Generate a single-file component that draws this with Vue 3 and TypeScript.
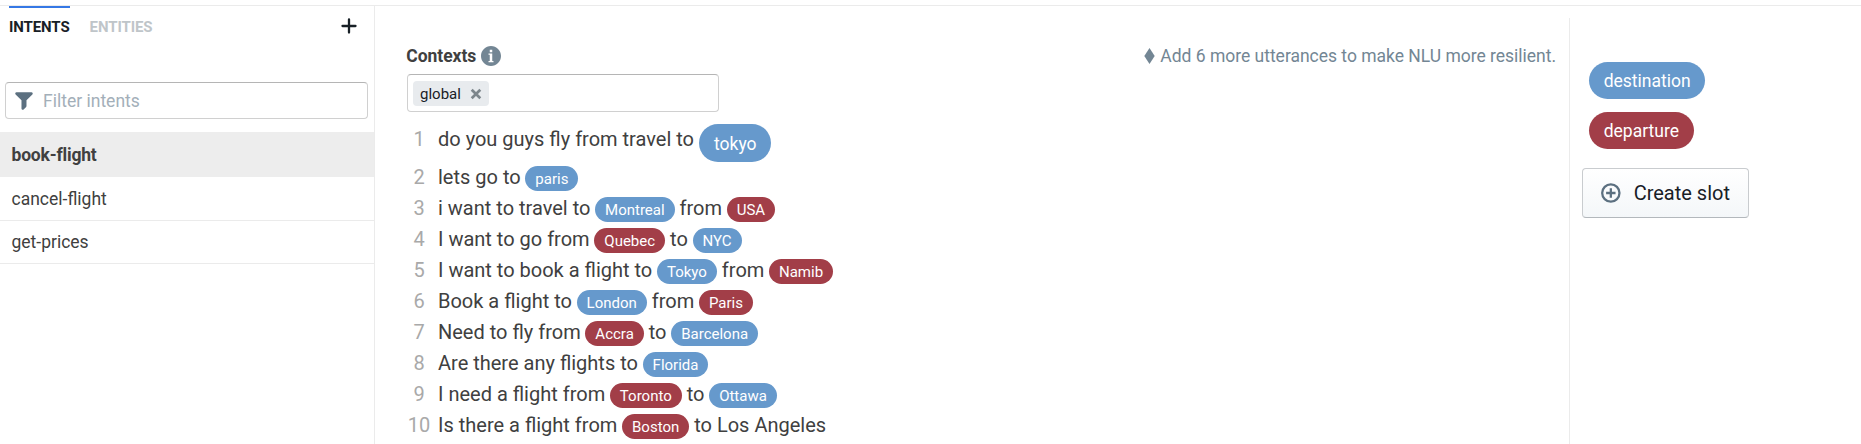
<script setup lang="ts">
import { ref } from 'vue'

type Slot = 'destination' | 'departure'
interface Part { text: string; slot?: Slot; active?: boolean }

const intents = ref<string[]>(['book-flight', 'cancel-flight', 'get-prices'])
const selected = ref('book-flight')
const filter = ref('')

const t = (text: string): Part => ({ text })
const to = (text: string, active = false): Part => ({ text, slot: 'destination', active })
const from = (text: string): Part => ({ text, slot: 'departure' })

const utterances: Part[][] = [
  [t('do you guys fly from travel to '), to('tokyo', true)],
  [t('lets go to '), to('paris')],
  [t('i want to travel to '), to('Montreal'), t(' from '), from('USA')],
  [t('I want to go from '), from('Quebec'), t(' to '), to('NYC')],
  [t('I want to book a flight to '), to('Tokyo'), t(' from '), from('Namib')],
  [t('Book a flight to '), to('London'), t(' from '), from('Paris')],
  [t('Need to fly from '), from('Accra'), t(' to '), to('Barcelona')],
  [t('Are there any flights to '), to('Florida')],
  [t('I need a flight from '), from('Toronto'), t(' to '), to('Ottawa')],
  [t('Is there a flight from '), from('Boston'), t(' to Los Angeles')],
]
const slots: Slot[] = ['destination', 'departure']
</script>

<template>
  <div class="page">
    <aside class="sidebar">
      <nav class="tabs">
        <span class="tab current">INTENTS</span>
        <span class="tab">ENTITIES</span>
        <svg class="plus" width="16" height="16" viewBox="0 0 16 16"><path d="M8 1.5v13M1.5 8h13" /></svg>
      </nav>
      <label class="filter">
        <svg width="20" height="20" viewBox="0 0 16 16"><path d="M13.99.99h-12a1 1 0 0 0-.71 1.71l4.71 4.71V14a1.003 1.003 0 0 0 1.71.71l2-2c.18-.18.29-.43.29-.71V7.41L14.7 2.7a1 1 0 0 0-.71-1.71z" /></svg>
        <input v-model="filter" placeholder="Filter intents" />
      </label>
      <ul class="intents">
        <li v-for="name in intents" :key="name" :class="{ selected: name === selected }" @click="selected = name">{{ name }}</li>
      </ul>
    </aside>

    <main class="editor">
      <header class="heading">
        <strong>Contexts</strong>
        <svg class="info" width="20" height="20" viewBox="0 0 16 16"><path d="M8 0C3.58 0 0 3.58 0 8s3.58 8 8 8 8-3.58 8-8-3.58-8-8-8zM7 3h2v2H7V3zm3 10H6v-1h1V7H6V6h3v6h1v1z" /></svg>
        <span class="hint">
          <svg width="11" height="16" viewBox="0 0 11 16"><path d="M5.5 0 10.7 8 5.5 16 .3 8z" /></svg>
          <span>Add 6 more utterances to make NLU more resilient.</span>
        </span>
      </header>
      <div class="contexts">
        <span class="tag"><span class="tag-name">global</span><svg width="12" height="12" viewBox="0 0 12 12"><path d="M1.7 1.7 10.3 10.3M10.3 1.7 1.7 10.3" /></svg></span>
      </div>
      <div class="utterances">
        <div v-for="(parts, i) in utterances" :key="i" class="utterance">
          <span class="number">{{ i + 1 }}</span>
          <template v-for="(part, j) in parts" :key="j">
            <span v-if="part.slot" class="chip" :class="[part.slot, { active: part.active }]">{{ part.text }}</span>
            <span v-else class="words">{{ part.text }}</span>
          </template>
        </div>
      </div>
    </main>

    <aside class="slots">
      <span v-for="s in slots" :key="s" class="slot" :class="s">{{ s }}</span>
      <button class="create">
        <svg width="20" height="20" viewBox="0 0 20 20"><circle cx="10" cy="10" r="8.8" /><path d="M10 5.2v9.6M5.2 10h9.6" /></svg>
        <span>Create slot</span>
      </button>
    </aside>
  </div>
</template>

<style>
body { margin: 0; background: #fff; }
</style>

<style scoped>
.page {
  box-sizing: border-box;
  height: 444px;
  padding-top: 6px;
  display: grid;
  grid-template-columns: 375px 1194px 1fr;
  overflow: hidden;
  font-family: Roboto, "Liberation Sans", sans-serif;
  font-size: 17.5px;
  color: #404040;
  background: linear-gradient(#ebebeb, #ebebeb) 0 5px / 100% 1px no-repeat #fff;
}
.sidebar { border-right: 1px solid #ebebeb; }
.tabs { display: flex; height: 41px; padding: 0 17px 0 9px; gap: 20px; margin-bottom: 35px; }
.tab { font-size: 15px; font-weight: 700; line-height: 43px; color: #bfc5c9; letter-spacing: -.1px; }
.tab.current { color: #182026; box-shadow: inset 0 2px #3578e5; }
.plus { margin: 12px 0 0 auto; fill: none; stroke: #182026; stroke-width: 2.3; stroke-linecap: round; }
.filter {
  box-sizing: border-box;
  display: flex;
  align-items: center;
  width: 363px;
  height: 37px;
  margin-left: 5px;
  padding: 0 8px;
  border: 1px solid #d0d0d0;
  border-top-color: #b5b5b5;
  border-radius: 4px;
}
.filter svg { fill: #5c7080; }
.filter input {
  flex: 1;
  min-width: 0;
  margin-left: 9px;
  padding: 0;
  border: 0;
  outline: 0;
  background: none;
  font: inherit;
}
.filter input::placeholder { color: #a3afb9; opacity: 1; }
.intents { list-style: none; margin: 13px 0 0; padding: 0; }
.intents li { height: 42px; padding-left: 11.5px; line-height: 43px; border-bottom: 1px solid #ebebeb; }
.intents li.selected { height: 45px; line-height: 47px; margin-bottom: 1px; border-bottom: 0; font-weight: 700; letter-spacing: -.18px; background: #ededed; }

.editor { padding: 38px 13px 0 32px; }
.heading { display: flex; align-items: center; height: 24px; }
.heading strong { margin-left: -.7px; letter-spacing: -.05px; }
.info { margin-left: 5px; fill: #738694; }
.hint { display: flex; align-items: center; margin-left: auto; gap: 5px; color: #738694; letter-spacing: -.015px; }
.hint svg { fill: #738694; }
.contexts {
  box-sizing: border-box;
  display: flex;
  width: 312px;
  height: 38px;
  margin-top: 6px;
  padding: 6px 5px;
  border: 1px solid #d0d0d0;
  border-top-color: #b5b5b5;
  border-radius: 4px;
}
.tag {
  box-sizing: border-box;
  display: flex;
  align-items: center;
  justify-content: space-between;
  width: 76px;
  height: 25px;
  padding: 0 7px;
  border-radius: 4px;
  background: #e8ebee;
  color: #182026;
  font-size: 15px;
}
.tag svg { fill: none; stroke: #7d868c; stroke-width: 2.7; }
.utterances { padding-top: 12px; font-size: 20px; }
.utterance { display: flex; align-items: flex-start; height: 31px; white-space: pre; line-height: 30px; }
.utterance:first-child { height: 38px; }
.number { width: 24px; margin-right: 7px; text-align: center; color: #a9a9a9; }
.chip {
  height: 25px;
  margin: 4px 0 0 -.3px;
  padding: 0 10px;
  border-radius: 12.5px;
  color: #fff;
  font-size: 15px;
  line-height: 26px;
}
.chip.active { height: 38px; margin: 0 0 0 .3px; padding: 0 14.8px; border-radius: 19px; font-size: 17.5px; line-height: 40px; }
.destination { background: #6699cc; }
.departure { background: #a23e48; }

.slots {
  display: flex;
  flex-direction: column;
  align-items: flex-start;
  margin-top: 12px;
  padding: 44px 0 0 12px;
  border-left: 1px solid #ebebeb;
}
.slot { height: 37px; margin: 0 0 13px 7px; padding: 0 14.7px; border-radius: 18.5px; color: #fff; line-height: 38px; }
.create {
  box-sizing: border-box;
  display: flex;
  align-items: center;
  gap: 13px;
  width: 167px;
  height: 50px;
  margin-top: 6px;
  padding: 0 18px;
  border: 1px solid #c9cccf;
  border-bottom-color: #b3b8bc;
  border-radius: 4px;
  background: linear-gradient(#fff, #f4f7f9);
  color: #182026;
  font: 20px Roboto, "Liberation Sans", sans-serif;
}
.create svg { fill: none; stroke: #5c7080; stroke-width: 2.3; }
.create span { white-space: nowrap; }
</style>
